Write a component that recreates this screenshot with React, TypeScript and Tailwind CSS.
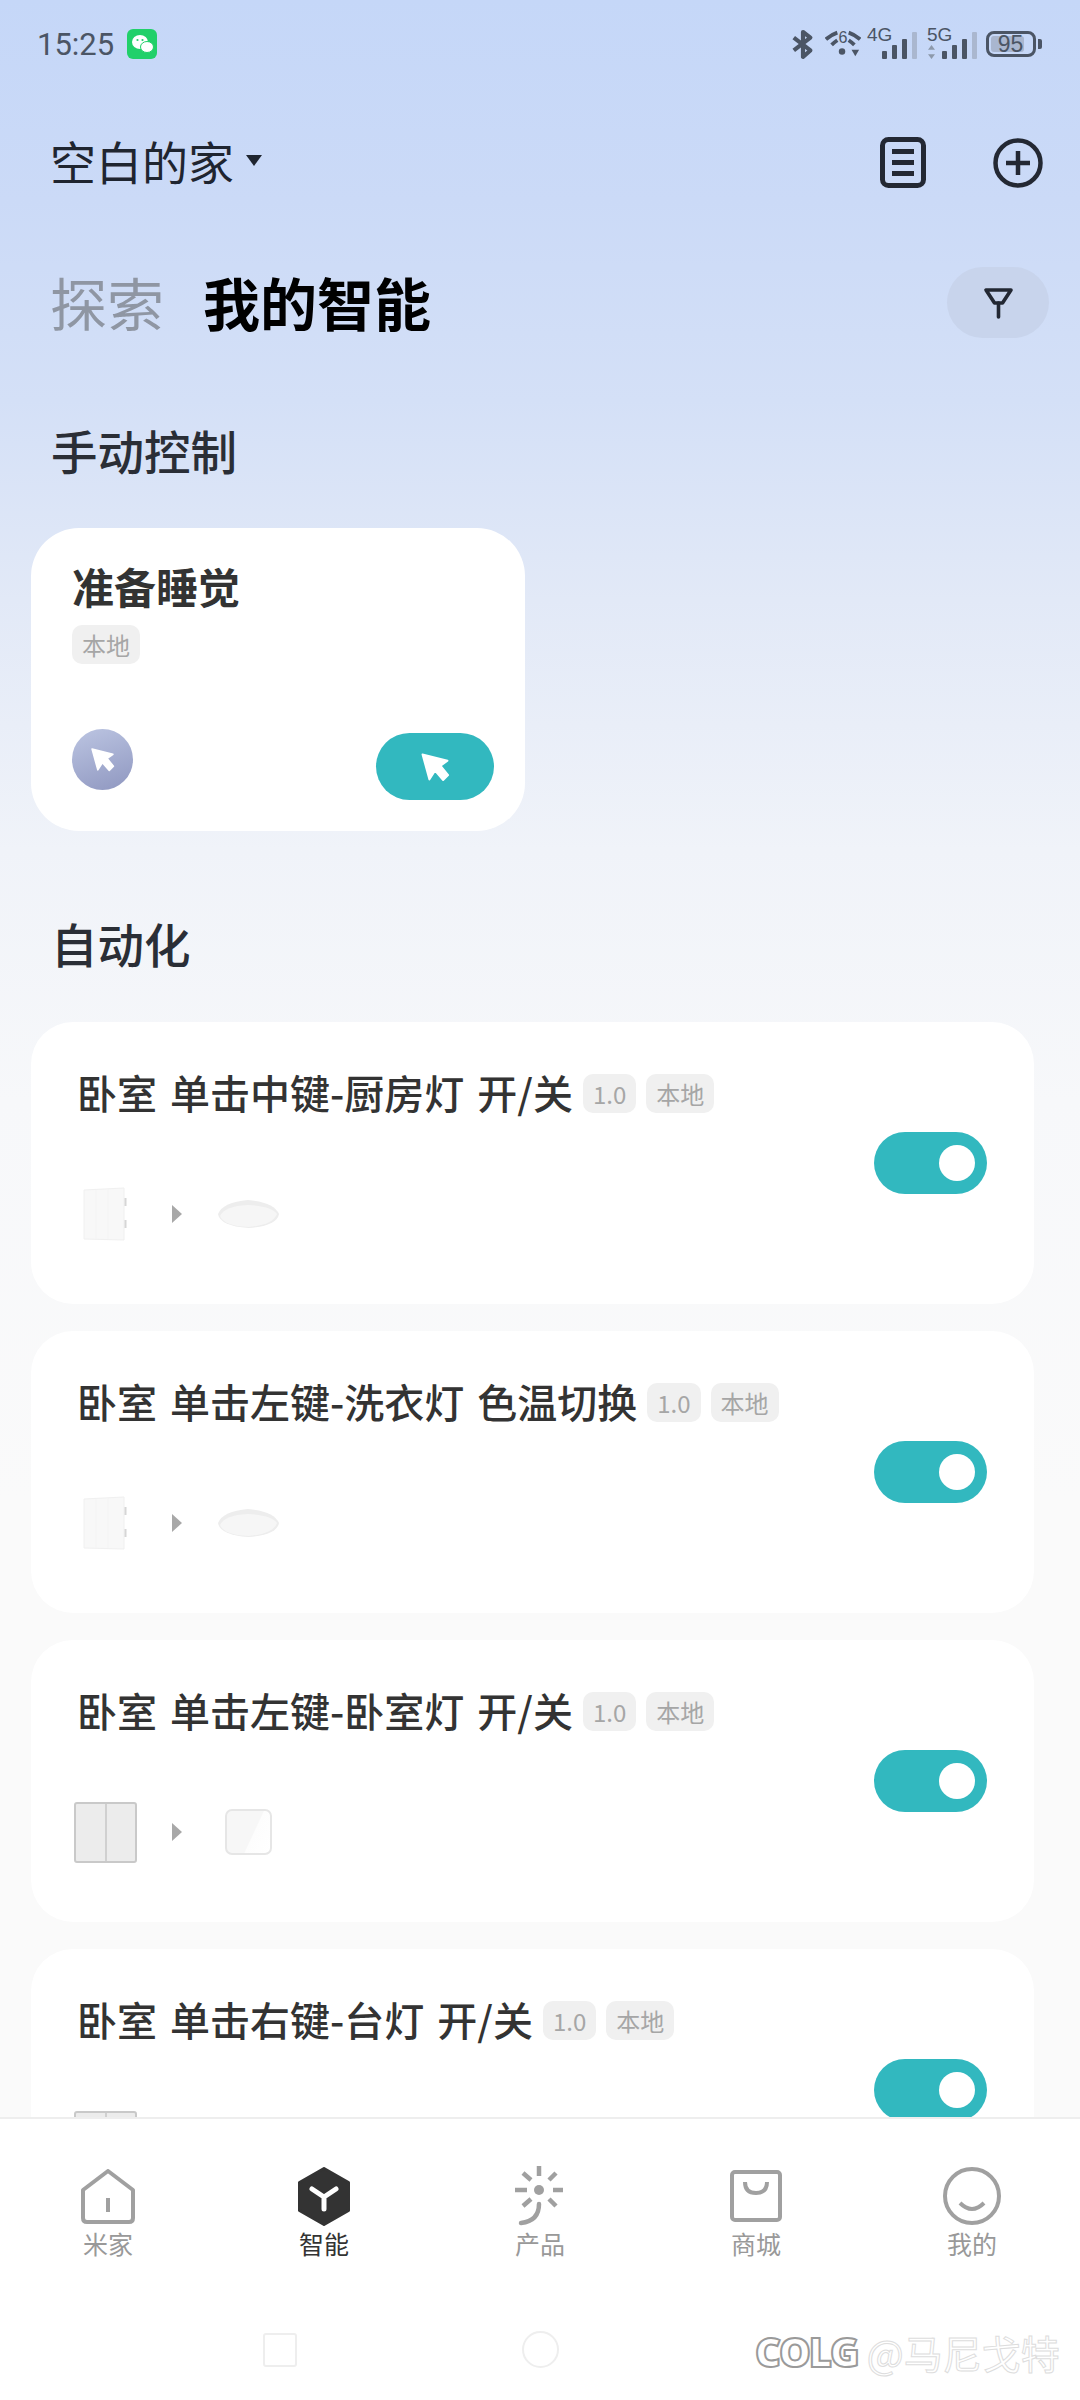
const font = "font-['Noto_Sans_CJK_SC','Noto_Sans',sans-serif]";

function Badge({ text }: { text: string }) {
  return (
    <span className="flex h-[39px] items-center rounded-[10px] bg-[#f0f0f0] px-[10px] text-[24px] leading-none text-[#a6a6a6]">
      {text}
    </span>
  );
}

function CursorIcon({ size }: { size: number }) {
  return (
    <svg width={size} height={size} viewBox="0 0 24 24">
      <path d="M2 2 L22 7 L16.5 11 L22.5 18.5 L18.5 22.5 L12 15 L7.5 22 Z" fill="#fff" strokeLinejoin="round" stroke="#fff" strokeWidth="1.5" />
    </svg>
  );
}

function Signal({ label, arrows }: { label: string; arrows?: boolean }) {
  return (
    <div className="relative h-[32px] w-[50px]">
      <span className="absolute left-0 top-[-3px] text-[19px] leading-[20px] font-['Liberation_Sans',sans-serif]">{label}</span>
      {arrows && (
        <svg width="7" height="14" viewBox="0 0 6 12" className="absolute bottom-[1px] left-[1px]">
          <path d="M3 0 L6 4 H0 Z M3 12 L6 8 H0 Z" fill="#8d99ab" />
        </svg>
      )}
      <div className="absolute bottom-[1px] right-0 flex items-end gap-[5px]">
        <div className="h-[8px] w-[5px] rounded-[1px] bg-[#4b5565]" />
        <div className="h-[14px] w-[5px] rounded-[1px] bg-[#4b5565]" />
        <div className="h-[20px] w-[5px] rounded-[1px] bg-[#4b5565]" />
        <div className="h-[27px] w-[5px] rounded-[1px] bg-[#aab7cf]" />
      </div>
    </div>
  );
}

function StatusIcons() {
  return (
    <div className="flex items-center text-[#4b5565]">
      <svg width="24" height="32" viewBox="0 0 26 32" fill="none" stroke="#4b5565" strokeWidth="4.5" strokeLinejoin="round">
        <path d="M3 9 L21 23 L13 30 L13 3 L21 9 L3 23" />
      </svg>
      <svg width="36" height="32" viewBox="0 0 38 32" className="ml-[10px]">
        <path d="M1 11 Q7 6 13 4 M25 4 Q31 6 37 11 M7 17 Q10 14 13 12 M25 12 Q28 14 31 17" stroke="#4b5565" strokeWidth="4" fill="none" />
        <text x="19" y="15" textAnchor="middle" fontSize="17" fill="#4b5565" fontFamily="Liberation Sans">6</text>
        <circle cx="18" cy="24" r="3.4" fill="#4b5565" />
        <path d="M28 22 h8 l-4 7 z" fill="#4b5565" />
      </svg>
      <div className="ml-[6px]">
        <Signal label="4G" />
      </div>
      <div className="ml-[10px]">
        <Signal label="5G" arrows />
      </div>
      <div className="ml-[9px] flex items-center gap-[2px]">
        <div className="flex h-[26px] w-[50px] items-center rounded-[8px] border-[3px] border-[#4b5565] p-[2px]">
          <div className="flex h-full w-[33px] items-center justify-center rounded-[3px] bg-[#a9b6cf] pl-[6px] text-[23px] leading-none font-['Liberation_Sans',sans-serif]">
            95
          </div>
        </div>
        <div className="h-[10px] w-[4px] rounded-r-[2px] bg-[#4b5565]" />
      </div>
    </div>
  );
}

function TripleSwitch() {
  return (
    <svg width="63" height="54" viewBox="0 0 63 54">
      <path d="M10 3 L50 1 V53 L10 52 Z" fill="#f8f8f8" stroke="#f0f0f0" />
      <path d="M22 3 V52 M34 2 V52" stroke="#f4f4f4" strokeWidth="1" />
      <path d="M51.5 11 v8 M51.5 33 v8" stroke="#d6d6d6" strokeWidth="2" />
    </svg>
  );
}

function CeilingLamp() {
  return (
    <svg width="63" height="30" viewBox="0 0 63 30">
      <path d="M1 15 Q6 3 31 1 Q57 3 62 15 Q60 27 31.5 29 Q3 27 1 15 Z" fill="#ededed" />
      <path d="M3 17 Q8 7 31 6 Q55 7 60 15 Q56 26 31.5 28 Q7 27 3 17 Z" fill="#f6f6f6" />
    </svg>
  );
}

function DoubleSwitch() {
  return (
    <div className="flex h-[61px] w-[63px] rounded-[3px] border-2 border-[#c9c9c9] bg-[#ececec]">
      <div className="flex-1 border-r-2 border-[#d0d0d0]" />
      <div className="flex-1" />
    </div>
  );
}

function SingleSwitch() {
  return (
    <div className="h-[46px] w-[47px] rounded-[7px] border-2 border-[#e6e6e6] bg-[linear-gradient(115deg,#f7f7f7_0%,#f7f7f7_58%,#fdfdfd_60%,#ffffff_100%)]" />
  );
}

function AutomationCard({ title, version, panel }: { title: string; version: string; panel: "triple" | "double" }) {
  return (
    <div className="flex h-[282px] w-[1003px] shrink-0 items-start justify-between rounded-[42px] bg-white pr-[47px]">
      <div className="pt-[52px]">
        <div className="flex items-center pl-[46px]">
          <span className="mt-[-2px] text-[40px] leading-[39px] font-medium whitespace-pre text-[#333333] [word-spacing:4px]">{title}</span>
          <div className="ml-[10px] flex gap-[10px]">
            <Badge text={version} />
            <Badge text="本地" />
          </div>
        </div>
        <div className="mt-[74px] flex h-[54px] items-center pl-[43px]">
          <div className="flex w-[63px] justify-center">
            {panel === "triple" ? <TripleSwitch /> : <DoubleSwitch />}
          </div>
          <svg width="10" height="18" viewBox="0 0 10 18" className="mx-[35px]">
            <path d="M0 0 L10 9 L0 18 Z" fill="#a8a8a8" />
          </svg>
          <div className="flex w-[63px] justify-center">
            {panel === "triple" ? <CeilingLamp /> : <SingleSwitch />}
          </div>
        </div>
      </div>
      <div className="mt-[110px] flex h-[62px] w-[113px] items-center justify-end rounded-full bg-[#32b8bf] pr-[12px]">
        <div className="h-[36px] w-[36px] rounded-full bg-white" />
      </div>
    </div>
  );
}

function NavItem({ label, active, children }: { label: string; active?: boolean; children: React.ReactNode }) {
  return (
    <div className="flex flex-col items-center">
      <div className="flex h-[60px] w-[60px] items-center justify-center">{children}</div>
      <span className={`text-[25px] leading-[34px] ${active ? "text-[#333333]" : "text-[#999999]"}`}>{label}</span>
    </div>
  );
}

export default function App() {
  return (
    <div className={`${font} relative flex h-[2400px] w-[1080px] flex-col overflow-hidden`}>
      <main className="min-h-0 flex-1 overflow-hidden bg-[linear-gradient(180deg,#c5d7f8_0%,#cbdaf7_200px,#d4e0f7_400px,#e2e9f7_600px,#f0f3f9_850px,#f7f8fa_1100px,#fafafa_1500px)]">
        <div className="flex h-[88px] items-center justify-between pl-[37px] pr-[38px]">
          <div className="flex items-center gap-[13px]">
            <span className="text-[31px] leading-none text-[#4b5565] font-['Roboto',sans-serif]">15:25</span>
            <div className="flex h-[30px] w-[30px] items-center justify-center rounded-[6px] bg-[#21d06a]">
              <svg width="23" height="20" viewBox="0 0 23 20">
                <ellipse cx="9" cy="8" rx="8" ry="7" fill="#fff" />
                <ellipse cx="16" cy="13" rx="6.5" ry="5.5" fill="#fff" stroke="#21d06a" strokeWidth="1" />
                <circle cx="6.5" cy="6" r="1.1" fill="#21d06a" />
                <circle cx="11.5" cy="6" r="1.1" fill="#21d06a" />
              </svg>
            </div>
          </div>
          <StatusIcons />
        </div>

        <header className="mt-[49px] flex h-[51px] items-center justify-between pl-[50px] pr-[37px]">
          <div className="flex items-center gap-[12px]">
            <span className="mt-[-5px] text-[46px] leading-none text-[#1f2530]">空白的家</span>
            <div className="mb-[4px] h-0 w-0 border-x-[8px] border-t-[11px] border-x-transparent border-t-[#1f2530]" />
          </div>
          <div className="flex items-center gap-[67px]">
            <svg width="46" height="51" viewBox="0 0 46 51" fill="none" stroke="#232833">
              <rect x="2.5" y="2.5" width="41" height="46" rx="6" strokeWidth="5" />
              <path d="M12 14.5 H34 M12 25.5 H34 M12 36.5 H34" strokeWidth="5" />
            </svg>
            <svg width="50" height="50" viewBox="0 0 50 50" fill="none" stroke="#232833" strokeWidth="4.5">
              <circle cx="25" cy="25" r="22.5" />
              <path d="M25 13 V37 M13 25 H37" />
            </svg>
          </div>
        </header>

        <div className="mt-[79px] flex h-[71px] items-center justify-between pl-[50px] pr-[31px]">
          <div className="flex items-center gap-[39px]">
            <span className="mt-[-3px] text-[57px] leading-none text-[#8f96a3]">探索</span>
            <span className="mt-[-3px] text-[57px] leading-none font-bold text-black">我的智能</span>
          </div>
          <div className="flex h-[71px] w-[102px] items-center justify-center rounded-full bg-[#c8d4ec]">
            <svg width="31" height="32" viewBox="0 0 31 32" fill="none" stroke="#232833" strokeWidth="3.6" strokeLinejoin="round" strokeLinecap="round">
              <path d="M3 3 H28 L19.5 16 H11.5 Z" />
              <path d="M15.5 16 V30" />
            </svg>
          </div>
        </div>

        <h2 className="mt-[82px] pl-[51px] text-[46.5px] leading-[60px] font-medium text-[#2a2e36]">手动控制</h2>

        <div className="mt-[48px] ml-[31px] h-[303px] w-[494px] rounded-[48px] bg-white pl-[41px] pr-[31px]">
          <div className="pt-[32px] text-[42px] leading-[52px] font-bold text-[#333333]">准备睡觉</div>
          <div className="mt-[13px] flex">
            <Badge text="本地" />
          </div>
          <div className="mt-[65px] flex items-start justify-between">
            <div className="flex h-[61px] w-[61px] items-center justify-center rounded-full bg-[linear-gradient(160deg,#bcc5e2,#8f97c0)]">
              <CursorIcon size={25} />
            </div>
            <div className="mt-[4px] flex h-[67px] w-[118px] items-center justify-center rounded-full bg-[#32b8bf]">
              <CursorIcon size={30} />
            </div>
          </div>
        </div>

        <h2 className="mt-[82px] pl-[51px] text-[46.5px] leading-[60px] font-medium text-[#2a2e36]">自动化</h2>

        <div className="mt-[49px] ml-[31px] flex flex-col gap-[27px]">
          <AutomationCard title="卧室 单击中键-厨房灯 开/关" version="1.0" panel="triple" />
          <AutomationCard title="卧室 单击左键-洗衣灯 色温切换" version="1.0" panel="triple" />
          <AutomationCard title="卧室 单击左键-卧室灯 开/关" version="1.0" panel="double" />
          <AutomationCard title="卧室 单击右键-台灯 开/关" version="1.0" panel="double" />
        </div>
      </main>

      <footer className="h-[283px] shrink-0 border-t-2 border-[#eeeeee] bg-white">
        <nav className="grid grid-cols-5 pt-[47px]">
          <NavItem label="米家">
            <svg width="54" height="55" viewBox="0 0 54 55" fill="none" stroke="#a0a0a0" strokeWidth="4" strokeLinejoin="round">
              <path d="M27 2 L52 21 V49 Q52 53 48 53 H6 Q2 53 2 49 V21 Z" />
              <path d="M27 29 V43" />
            </svg>
          </NavItem>
          <NavItem label="智能" active>
            <svg width="52" height="59" viewBox="0 0 52 59">
              <path d="M26 1.5 L50.5 15.5 V43.5 L26 57.5 L1.5 43.5 V15.5 Z" fill="#333333" stroke="#333333" strokeWidth="3" strokeLinejoin="round" />
              <path d="M14 22 L26 30 L38 22 M26 30 V42" fill="none" stroke="#fff" strokeWidth="5" strokeLinecap="round" strokeLinejoin="round" />
            </svg>
          </NavItem>
          <NavItem label="产品">
            <svg width="52" height="60" viewBox="0 0 52 60" fill="none" stroke="#a0a0a0" strokeWidth="4.5">
              <circle cx="25" cy="24" r="5" fill="#a0a0a0" stroke="none" />
              <path d="M25 0 V10 M9 7 L17 14 M1 24 H13 M39 24 H49 M42 7 L35 14 M9 40 L17 33 M35 33 L42 40" />
              <path d="M25 38 Q25 55 7 57" strokeLinecap="round" />
            </svg>
          </NavItem>
          <NavItem label="商城">
            <svg width="52" height="52" viewBox="0 0 52 52" fill="none" stroke="#a0a0a0" strokeWidth="4" strokeLinejoin="round">
              <rect x="2" y="2" width="48" height="48" rx="3" />
              <path d="M15 12 Q15 23 26 23 Q37 23 37 12" />
            </svg>
          </NavItem>
          <NavItem label="我的">
            <svg width="58" height="58" viewBox="0 0 58 58" fill="none" stroke="#a0a0a0" strokeWidth="4">
              <circle cx="29" cy="29" r="27" />
              <path d="M17 36 Q29 48 41 36" />
            </svg>
          </NavItem>
        </nav>
        <div className="mt-[71px] flex items-center pl-[263px]">
          <div className="h-[34px] w-[34px] rounded-[3px] border-2 border-[#eeeeee]" />
          <div className="ml-[225px] h-[37px] w-[37px] rounded-full border-2 border-[#eeeeee]" />
        </div>
      </footer>

      <div className="absolute left-[755px] top-[2327px] flex items-center gap-[9px]">
        <span className="text-[40px] leading-[50px] font-black tracking-[-2px] text-white font-['Open_Sans',sans-serif] [-webkit-text-stroke:2px_#9a9a9a]">COLG</span>
        <span className="text-[39px] leading-[50px] text-transparent [-webkit-text-stroke:1px_#dddddd]">@马尼戈特</span>
      </div>
    </div>
  );
}
